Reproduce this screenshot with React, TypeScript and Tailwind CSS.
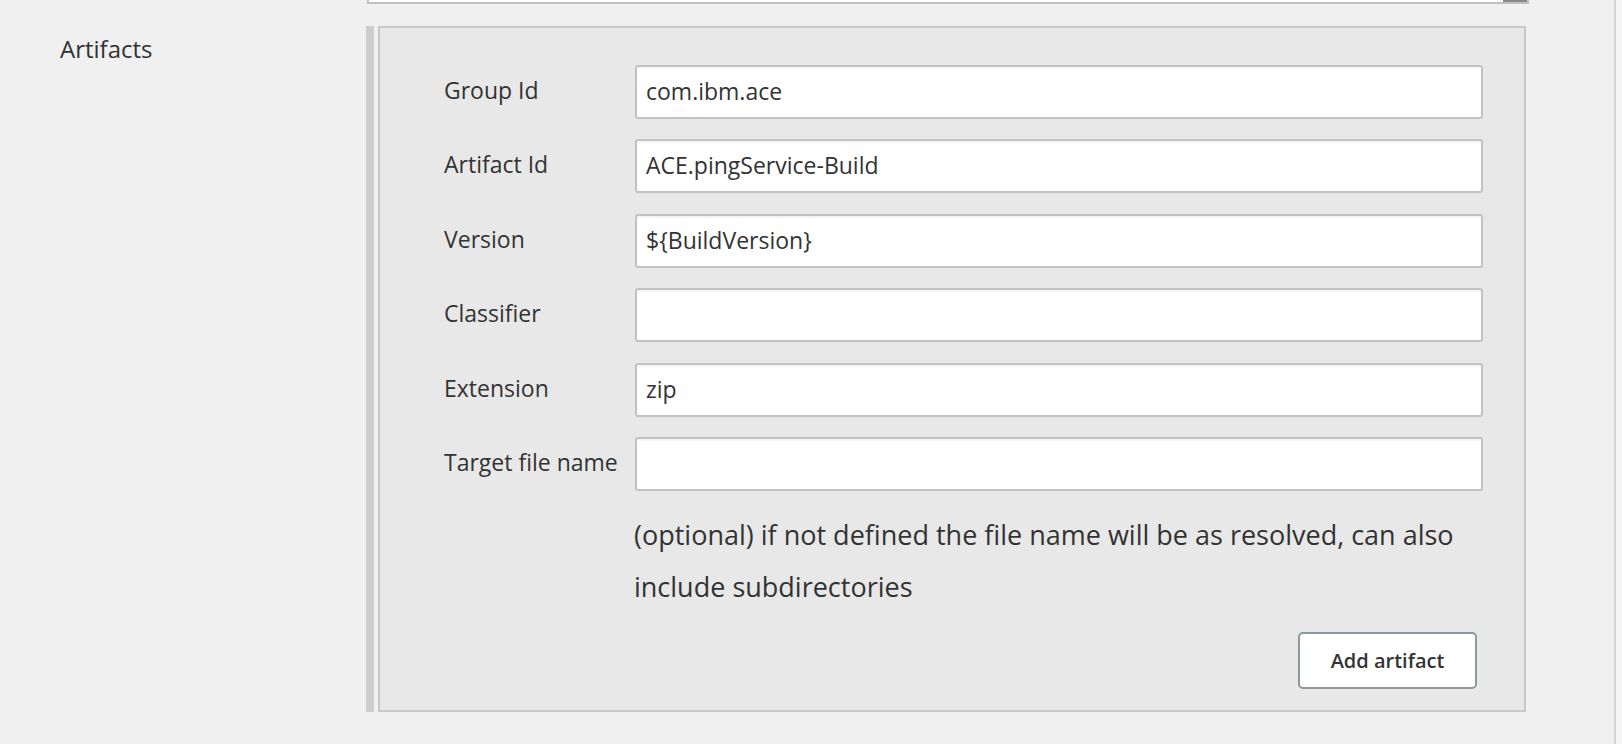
const fields = [
  { label: "Group Id", value: "com.ibm.ace" },
  { label: "Artifact Id", value: "ACE.pingService-Build" },
  { label: "Version", value: "${BuildVersion}" },
  { label: "Classifier", value: "" },
  { label: "Extension", value: "zip" },
  { label: "Target file name", value: "" },
];

// ─── One label + text box row ────────────────────────────────────────────────

function FieldRow({ label, value }: { label: string; value: string }) {
  return (
    <div className="flex items-center">
      <div className="w-[191px] shrink-0 pb-[4px] text-[23px] leading-[32px] whitespace-nowrap">
        {label}
      </div>
      <input
        readOnly
        defaultValue={value}
        className="flex-1 min-w-0 h-[54px] px-[9px] pb-[2px] bg-white border-2 border-[#c2c2c2] rounded-[3px] shadow-[inset_0_2px_1px_rgba(0,0,0,0.04)] text-[23px] text-[#333] outline-none"
      />
    </div>
  );
}

export default function App() {
  return (
    <div className="h-[744px] w-full overflow-hidden flex bg-[#f0f0f0] text-[#333] font-['Open_Sans','Noto_Sans',sans-serif]">
      <div className="flex-1 flex flex-col border-r-2 border-[#d2d2d2]">
        {/* tail of the text area above */}
        <div className="ml-[367px] w-[1162px] h-[4px] bg-white border-x-2 border-b-2 border-[#c0c0c0] flex justify-end">
          <div className="w-[24px] h-[2px] bg-[#888]" />
        </div>

        <div className="mt-[22px] flex">
          <div className="w-[366px] shrink-0 pl-[60px] pt-[7px] text-[24px] leading-[32px]">
            Artifacts
          </div>

          <div className="w-[8px] bg-[#cdcdcd]" />

          <div className="ml-[4px] w-[1148px] bg-[#e8e8e8] border-2 border-[#c8c8c8] pt-[37px] pl-[64px] pr-[41px] pb-[21px]">
            <div className="flex flex-col gap-[20.4px]">
              {fields.map((f) => (
                <FieldRow key={f.label} label={f.label} value={f.value} />
              ))}
            </div>

            <p className="mt-[18px] ml-[190px] text-[27px] leading-[51.7px]">
              (optional) if not defined the file name will be as resolved, can also include subdirectories
            </p>

            <div className="mt-[20px] flex justify-end pr-[6px]">
              <button className="w-[179px] h-[57px] bg-white border-2 border-[#8c979e] rounded-[5px] text-[20px] font-semibold text-[#333]">
                Add artifact
              </button>
            </div>
          </div>
        </div>
      </div>
      <div className="w-[6px] bg-[#f5f5f5]" />
    </div>
  );
}
